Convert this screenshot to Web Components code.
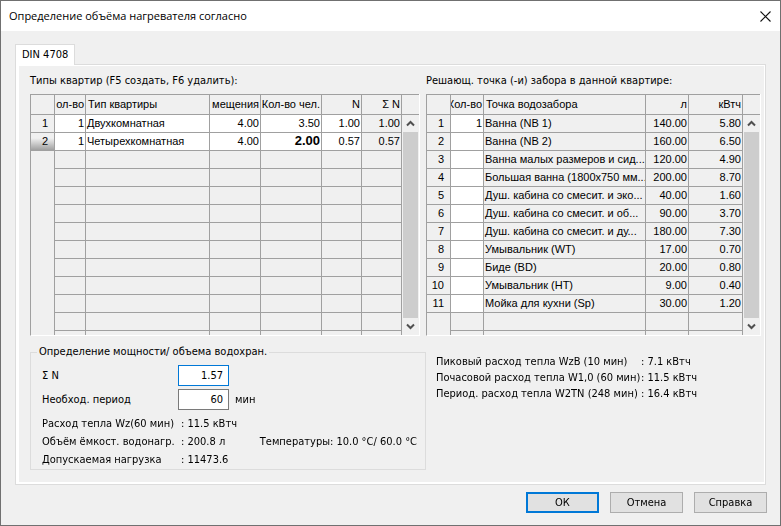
<!DOCTYPE html>
<html lang="ru">
<head>
<meta charset="utf-8">
<title>Определение объёма нагревателя согласно</title>
<style>
  body {
    margin: 0;
    background: #707070;
    color: #000;
    font: 11px/16px 'DejaVu Sans Condensed', 'DejaVu Sans', sans-serif;
  }

  .panes {
    display: grid;
    grid-template-columns: 396fr 334fr;
    row-gap: 8px;
  }

  #flats {
    margin-right: 7px;
  }

  #peaks {
    margin: 10px 0 0 10px;
  }
</style>
</head>
<body>

<heater-dialog caption="Определение объёма нагревателя согласно">
  <tab-panel label="DIN 4708">
    <div class="panes">
      <data-grid id="flats" label="Типы квартир (F5 создать, F6 удалить):"></data-grid>
      <data-grid id="taps" label="Решающ. точка (-и) забора в данной квартире:"></data-grid>
      <power-group></power-group>
      <value-list id="peaks" dense></value-list>
    </div>
  </tab-panel>
  <dialog-button slot="actions" primary>ОК</dialog-button>
  <dialog-button slot="actions">Отмена</dialog-button>
  <dialog-button slot="actions">Справка</dialog-button>
</heater-dialog>

<script>
class BaseElement extends HTMLElement {
  constructor() {
    super()
    this.attachShadow({ mode: 'open' })
  }

  connectedCallback() {
    this.render()
  }

  render() {
    var template = document.createElement('template')
    template.innerHTML = this.styles() + this.html()
    this.shadowRoot.replaceChildren(template.content)
  }
}

class HeaterDialog extends BaseElement {
  styles() {
    return `
      <style>
        :host {
          display: flex;
          flex-direction: column;
          box-sizing: border-box;
          min-height: 100vh;
          border: 1px solid #707070;
          background: #f0f0f0;
        }

        header {
          display: flex;
          align-items: center;
          justify-content: space-between;
          height: 30px;
          padding: 0 9px 0 8px;
          background: #fff;
        }

        h1 {
          margin: 0;
          font: 11px/16px 'Open Sans', sans-serif;
        }

        header button {
          display: block;
          padding: 0;
          border: 0;
          background: none;
        }

        svg {
          display: block;
        }

        main {
          flex: 1;
          display: flex;
          flex-direction: column;
          padding: 13px 14px 0;
        }

        footer {
          display: flex;
          justify-content: flex-end;
          gap: 11px;
          padding: 7px 13px 12px;
        }
      </style>
    `
  }

  html() {
    return `
      <header>
        <h1>${this.getAttribute('caption')}</h1>
        <button type="button" aria-label="Закрыть">
          <svg width="11" height="11" viewBox="0 0 11 11">
            <path d="M.5.5l10 10M10.5.5l-10 10" fill="none" stroke="#111" stroke-width="1.1"/>
          </svg>
        </button>
      </header>
      <main><slot></slot></main>
      <footer><slot name="actions"></slot></footer>
    `
  }
}

class TabPanel extends BaseElement {
  styles() {
    return `
      <style>
        :host {
          flex: 1;
          display: flex;
          flex-direction: column;
        }

        button {
          z-index: 1;
          position: relative;
          align-self: flex-start;
          box-sizing: border-box;
          height: 21px;
          margin-bottom: -1px;
          padding: 0 6px;
          border: 1px solid #dcdcdc;
          border-bottom: 0;
          background: #fff;
          color: inherit;
          font: inherit;
        }

        section {
          flex: 1;
          margin: 1px;
          padding: 7px 4px 11px 11px;
          border: solid #fff;
          border-width: 1px 1px 2px 3px;
          outline: 1px solid #dcdcdc;
        }
      </style>
    `
  }

  html() {
    return `
      <button type="button" role="tab" aria-selected="true">${this.getAttribute('label')}</button>
      <section role="tabpanel"><slot></slot></section>
    `
  }
}

class ScrollBar extends BaseElement {
  styles() {
    return `
      <style>
        :host {
          display: flex;
          flex-direction: column;
          width: 17px;
        }

        .corner {
          height: 19px;
          border-bottom: 1px solid #a0a0a0;
        }

        button {
          display: flex;
          align-items: center;
          justify-content: center;
          height: 17px;
          padding: 0;
          border: 0;
          background: #f0f0f0;
        }

        .thumb {
          flex: 1;
          margin: 0 1px;
          background: #cdcdcd;
        }
      </style>
    `
  }

  html() {
    return `
      <div class="corner"></div>
      <button type="button" aria-label="Вверх">${this.arrow('M1 5.5L4.500 2 8 5.500')}</button>
      <div class="thumb"></div>
      <button type="button" aria-label="Вниз">${this.arrow('M1 1.500L4.500 5 8 1.500')}</button>
    `
  }

  arrow(path) {
    return `<svg width="9" height="7" viewBox="0 0 9 7"><path d="${path}" fill="none" stroke="#505050" stroke-width="2"/></svg>`
  }
}

class DataGrid extends BaseElement {
  set data(value) {
    this.grid = value
    this.render()
  }

  styles() {
    return `
      <style>
        :host {
          display: block;
          min-width: 0;
        }

        .label {
          margin-bottom: 5px;
        }

        .frame {
          display: flex;
          border: solid #a0a0a0;
          border-width: 1px 0 0 1px;
          border-bottom: 1px solid #fff;
          box-shadow: 1px 0 #fff;
        }

        table {
          flex: 1;
          width: 0;
          table-layout: fixed;
          border-spacing: 0;
          font: 11px/17px 'Liberation Sans', sans-serif;
        }

        th, td {
          box-sizing: border-box;
          height: 18px;
          padding: 0 0 0 1px;
          border: solid #a0a0a0;
          border-width: 0 1px 1px 0;
          overflow: hidden;
          white-space: nowrap;
          font-weight: normal;
          text-align: left;
        }

        thead th {
          height: 20px;
          padding: 0 2px;
          line-height: 19px;
        }

        thead span {
          display: flex;
        }

        .num {
          padding-right: 1px;
          text-align: right;
        }

        .num span {
          justify-content: flex-end;
        }

        tbody th {
          padding-right: 6px;
          text-align: right;
        }

        .selected {
          background: linear-gradient(#f0f0f0 30%, #a0a0a0);
        }

        .open {
          border-bottom: 0;
        }

        .edit {
          background: #fff;
        }

        thead .edit {
          background: none;
        }

        .cut th, .cut td {
          height: 4px;
          border-bottom: 0;
        }

        b {
          font-size: 13px;
          line-height: 1px;
        }
      </style>
    `
  }

  html() {
    if (!this.grid) return ''
    var { cols, rows, selected, total } = this.grid
    var body = Array.from({ length: total }, (_, idx) => this.row(idx, rows[idx], cols, idx === selected))
    return `
      <div class="label">${this.getAttribute('label')}</div>
      <div class="frame">
        <table aria-label="${this.getAttribute('label')}">
          <colgroup>
            <col style="width: 24px">
            ${cols.map(col => `<col${col.width ? ` style="width: ${col.width}px"` : ''}>`).join('')}
          </colgroup>
          <thead>
            <tr><th></th>${cols.map(col => `<th scope="col" class="${col.num ? 'num' : ''}"><span>${col.name}</span></th>`).join('')}</tr>
          </thead>
          <tbody>
            ${body.join('')}
            <tr class="cut"><th></th>${cols.map(() => '<td></td>').join('')}</tr>
          </tbody>
        </table>
        <scroll-bar></scroll-bar>
      </div>
    `
  }

  row(idx, row, cols, selected) {
    if (!row) {
      return `<tr><th class="open"></th>${cols.map(() => '<td></td>').join('')}</tr>`
    }
    var cells = cols.map((col, i) => {
      var cls = [col.num && 'num', col.edit && 'edit'].filter(Boolean).join(' ')
      return `<td class="${cls}">${row[i]}</td>`
    })
    return `<tr><th scope="row" class="${selected ? 'selected' : ''}">${idx + 1}</th>${cells.join('')}</tr>`
  }
}

class ValueList extends BaseElement {
  set items(value) {
    this.list = value
    this.render()
  }

  styles() {
    return `
      <style>
        :host {
          display: block;
        }

        dl {
          display: grid;
          grid-template-columns: 139px auto;
          grid-auto-rows: 18px;
          align-items: center;
          margin: 0;
          white-space: nowrap;
        }

        :host([dense]) dl {
          grid-template-columns: 205px auto;
          grid-auto-rows: 16px;
        }

        dd {
          margin: 0;
        }
      </style>
    `
  }

  html() {
    var list = this.list || []
    return `<dl>${list.map(([name, value]) => `<dt>${name}</dt><dd>: ${value}</dd>`).join('')}</dl>`
  }
}

class PowerGroup extends BaseElement {
  styles() {
    return `
      <style>
        :host {
          display: block;
        }

        fieldset {
          min-width: 0;
          margin: 0;
          padding: 3px 8px 0 11px;
          border: 1px solid #dcdcdc;
        }

        legend {
          margin-left: -5px;
          padding: 0 2px;
        }

        .field {
          display: grid;
          grid-template-columns: 136px 51px auto;
          align-items: center;
          height: 24px;
        }

        label, .unit {
          padding-top: 2px;
        }

        .unit {
          margin-left: 6px;
        }

        input {
          box-sizing: border-box;
          width: 51px;
          height: 21px;
          padding: 0 5px;
          border: 1px solid #7a7a7a;
          background: #fff;
          color: inherit;
          font: inherit;
          text-align: right;
        }

        input:focus {
          border-color: #0078d7;
          outline: none;
        }

        .results {
          display: flex;
          align-items: center;
          justify-content: space-between;
          padding-top: 4px;
          white-space: nowrap;
        }
      </style>
    `
  }

  html() {
    return `
      <fieldset>
        <legend>Определение мощности/ объема водохран.</legend>
        <div class="field">
          <label for="sum">Σ N</label>
          <input id="sum" value="1.57">
        </div>
        <div class="field">
          <label for="period">Необход. период</label>
          <input id="period" value="60">
          <span class="unit">мин</span>
        </div>
        <div class="results">
          <value-list></value-list>
          <span>Температуры: 10.0 °C/ 60.0 °C</span>
        </div>
      </fieldset>
    `
  }

  render() {
    super.render()
    this.shadowRoot.querySelector('value-list').items = [
      ['Расход тепла Wz(60 мин)', '11.5 кВтч'],
      ['Объём ёмкост. водонагр.', '200.8 л'],
      ['Допускаемая нагрузка', '11473.6']
    ]
  }

  focusFirst() {
    var input = this.shadowRoot.querySelector('input')
    input.focus()
    input.setSelectionRange(0, 0)
  }
}

class DialogButton extends BaseElement {
  styles() {
    return `
      <style>
        :host {
          display: block;
        }

        button {
          box-sizing: border-box;
          width: 73px;
          height: 21px;
          padding: 0;
          border: 1px solid #adadad;
          background: #e1e1e1;
          color: inherit;
          font: inherit;
        }

        :host([primary]) button {
          border: 2px solid #0078d7;
        }
      </style>
    `
  }

  html() {
    return `<button type="button"><slot></slot></button>`
  }
}

customElements.define('scroll-bar', ScrollBar)
customElements.define('data-grid', DataGrid)
customElements.define('value-list', ValueList)
customElements.define('power-group', PowerGroup)
customElements.define('dialog-button', DialogButton)
customElements.define('tab-panel', TabPanel)
customElements.define('heater-dialog', HeaterDialog)

document.querySelector('#flats').data = {
  total: 12,
  selected: 1,
  cols: [
    { name: 'ол-во', width: 31, num: true, edit: true },
    { name: 'Тип квартиры', edit: true },
    { name: 'мещения', width: 51, num: true, edit: true },
    { name: 'Кол-во чел.', width: 61, num: true, edit: true },
    { name: 'N', width: 40, num: true, edit: true },
    { name: 'Σ N', width: 40, num: true }
  ],
  rows: [
    ['1', 'Двухкомнатная', '4.00', '3.50', '1.00', '1.00'],
    ['1', 'Четырехкомнатная', '4.00', '<b>2.00</b>', '0.57', '0.57']
  ]
}

document.querySelector('#taps').data = {
  total: 12,
  cols: [
    { name: 'Кол-во', width: 33, num: true, edit: true },
    { name: 'Точка водозабора' },
    { name: 'л', width: 43, num: true },
    { name: 'кВтч', width: 54, num: true }
  ],
  rows: [
    ['1', 'Ванна (NB 1)', '140.00', '5.80'],
    ['', 'Ванна (NB 2)', '160.00', '6.50'],
    ['', 'Ванна малых размеров и сид...', '120.00', '4.90'],
    ['', 'Большая ванна (1800x750 мм...', '200.00', '8.70'],
    ['', 'Душ. кабина со смесит. и эко...', '40.00', '1.60'],
    ['', 'Душ. кабина со смесит. и об...', '90.00', '3.70'],
    ['', 'Душ. кабина со смесит. и ду...', '180.00', '7.30'],
    ['', 'Умывальник (WT)', '17.00', '0.70'],
    ['', 'Биде (BD)', '20.00', '0.80'],
    ['', 'Умывальник (HT)', '9.00', '0.40'],
    ['', 'Мойка для кухни (Sp)', '30.00', '1.20']
  ]
}

document.querySelector('#peaks').items = [
  ['Пиковый расход тепла WzB (10 мин)', '7.1 кВтч'],
  ['Почасовой расход тепла W1,0 (60 мин)', '11.5 кВтч'],
  ['Период. расход тепла W2TN (248 мин)', '16.4 кВтч']
]

document.querySelector('power-group').focusFirst()
</script>
</body>
</html>
